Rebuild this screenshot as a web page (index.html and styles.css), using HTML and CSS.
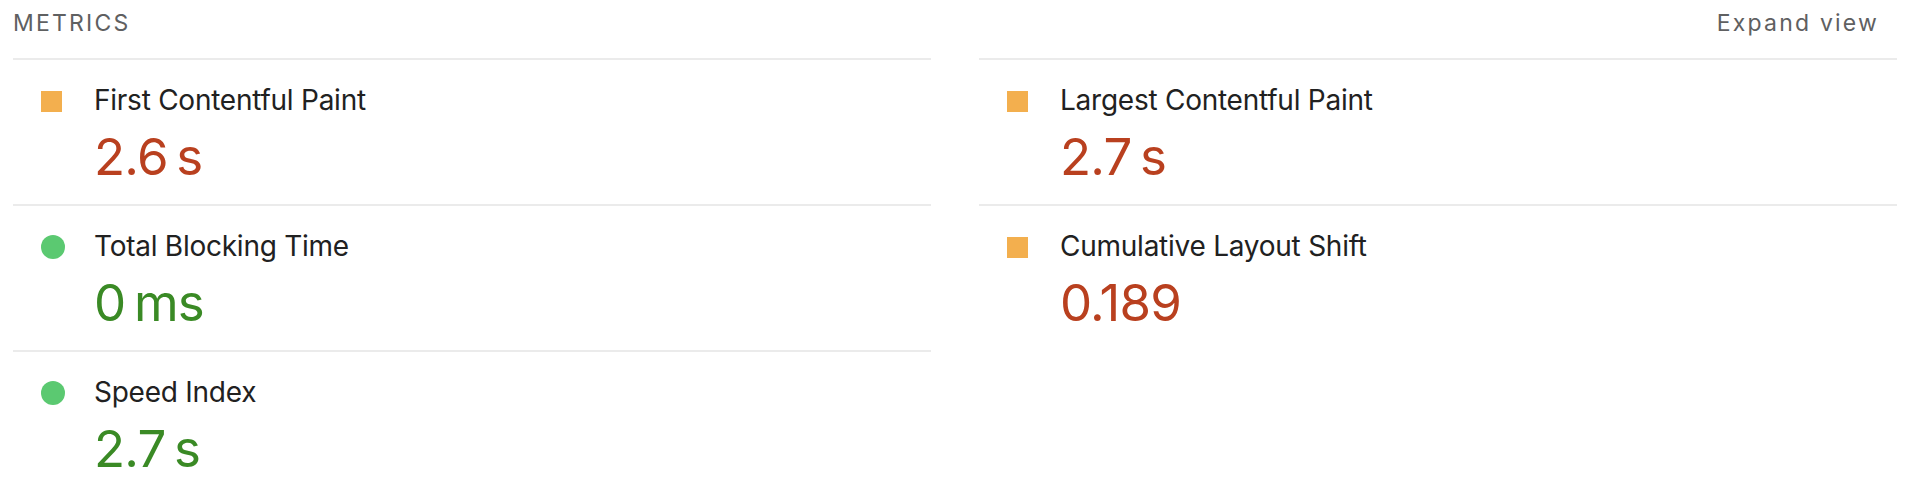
FILE: index.html
```html
<!DOCTYPE html>
<html lang="en">
<head>
<meta charset="utf-8">
<title>Metrics</title>
<link rel="stylesheet" href="styles.css">
</head>
<body>
<section class="metrics">
  <header class="metrics-header">
    <span class="metrics-title">METRICS</span>
    <span class="metrics-toggle">Expand view</span>
  </header>
  <div class="metrics-grid">
    <div class="metric">
      <span class="icon icon-average"></span>
      <div class="metric-body">
        <div class="metric-label">First Contentful Paint</div>
        <div class="metric-value value-average">2.6 s</div>
      </div>
    </div>
    <div class="metric">
      <span class="icon icon-average"></span>
      <div class="metric-body">
        <div class="metric-label">Largest Contentful Paint</div>
        <div class="metric-value value-average">2.7 s</div>
      </div>
    </div>
    <div class="metric">
      <span class="icon icon-pass"></span>
      <div class="metric-body">
        <div class="metric-label">Total Blocking Time</div>
        <div class="metric-value value-pass">0 ms</div>
      </div>
    </div>
    <div class="metric">
      <span class="icon icon-average"></span>
      <div class="metric-body">
        <div class="metric-label">Cumulative Layout Shift</div>
        <div class="metric-value value-average">0.189</div>
      </div>
    </div>
    <div class="metric">
      <span class="icon icon-pass"></span>
      <div class="metric-body">
        <div class="metric-label">Speed Index</div>
        <div class="metric-value value-pass">2.7 s</div>
      </div>
    </div>
  </div>
</section>
</body>
</html>
```

FILE: styles.css
```css
html, body {
  margin: 0;
  padding: 0;
  background: #ffffff;
}

body {
  font-family: Inter, "Noto Sans", "Liberation Sans", sans-serif;
  color: #212121;
}

.metrics {
  padding: 0 13px;
}

.metrics-header {
  display: flex;
  justify-content: space-between;
  align-items: flex-start;
  height: 58px;
  padding: 7px 18px 0 0;
  box-sizing: border-box;
}

.metrics-title {
  font-size: 23px;
  line-height: 32px;
  letter-spacing: 2.2px;
  color: #5f6061;
}

.metrics-toggle {
  font-size: 23px;
  line-height: 32px;
  letter-spacing: 2.2px;
  color: #5f6061;
}

.metrics-grid {
  display: grid;
  grid-template-columns: 1fr 1fr;
  column-gap: 48px;
}

.metric {
  display: flex;
  align-items: flex-start;
  border-top: 2px solid #ebebeb;
  padding: 22px 0 17px 28px;
  height: 146px;
  box-sizing: border-box;
}

.icon {
  flex: none;
  display: block;
}

.icon-average {
  width: 21px;
  height: 21px;
  margin-top: 9px;
  margin-right: 32px;
  background: #f3af4e;
}

.icon-pass {
  width: 24px;
  height: 24px;
  margin-top: 7px;
  margin-right: 29px;
  border-radius: 50%;
  background: #5bc971;
}

.metric-label {
  font-size: 28px;
  line-height: 36px;
  letter-spacing: -0.25px;
  color: #212121;
}

.metric-value {
  font-size: 51px;
  line-height: 60px;
  margin-top: 9px;
  letter-spacing: -0.8px;
  word-spacing: -5px;
}

.value-average {
  color: #b9401f;
}

.value-pass {
  color: #3a8a25;
}
```
